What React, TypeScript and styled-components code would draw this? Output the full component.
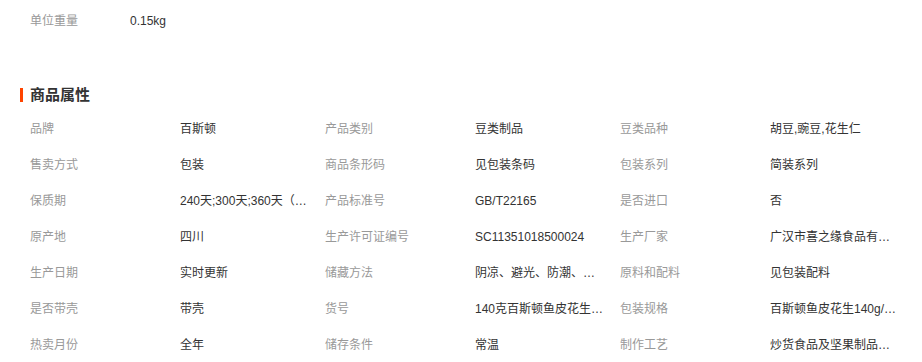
import React from "react";
import styled, { createGlobalStyle } from "styled-components";

const GlobalStyle = createGlobalStyle`
  html, body {
    margin: 0;
    padding: 0;
    background: #ffffff;
  }
  body {
    font-family: "Liberation Sans", "Noto Sans CJK SC", sans-serif;
    font-size: 12px;
    color: #333333;
  }
`;

const Page = styled.div`
  width: 922px;
  padding: 8px 0 0 0;
  box-sizing: border-box;
`;

const BasicRow = styled.div`
  display: flex;
  padding-left: 30px;
  line-height: 26px;
  height: 26px;
`;

const BasicLabel = styled.span`
  width: 100px;
  color: #999999;
`;

const BasicValue = styled.span`
  color: #333333;
`;

const SectionTitle = styled.h3`
  display: flex;
  align-items: center;
  margin: 51px 0 6px 20px;
  height: 20px;
  font-size: 15px;
  font-weight: bold;
  color: #333333;
  line-height: 20px;
  &::before {
    content: "";
    display: block;
    width: 3px;
    height: 14px;
    margin-right: 7px;
    background: #ff4400;
  }
`;

const AttrGrid = styled.div`
  display: grid;
  grid-template-columns: repeat(3, 150px 145px);
  grid-auto-rows: 36px;
  padding-left: 30px;
`;

const AttrLabel = styled.div`
  color: #999999;
  line-height: 36px;
  white-space: nowrap;
`;

const AttrValue = styled.div`
  color: #333333;
  line-height: 36px;
  max-width: 130px;
  white-space: nowrap;
  overflow: hidden;
  text-overflow: ellipsis;
`;

const attrs: [string, string][] = [
  ["品牌", "百斯顿"],
  ["产品类别", "豆类制品"],
  ["豆类品种", "胡豆,豌豆,花生仁"],
  ["售卖方式", "包装"],
  ["商品条形码", "见包装条码"],
  ["包装系列", "简装系列"],
  ["保质期", "240天;300天;360天（365天）"],
  ["产品标准号", "GB/T22165"],
  ["是否进口", "否"],
  ["原产地", "四川"],
  ["生产许可证编号", "SC11351018500024"],
  ["生产厂家", "广汉市喜之缘食品有限公司"],
  ["生产日期", "实时更新"],
  ["储藏方法", "阴凉、避光、防潮、密封保存"],
  ["原料和配料", "见包装配料"],
  ["是否带壳", "带壳"],
  ["货号", "140克百斯顿鱼皮花生袋装"],
  ["包装规格", "百斯顿鱼皮花生140g/袋*30袋"],
  ["热卖月份", "全年"],
  ["储存条件", "常温"],
  ["制作工艺", "炒货食品及坚果制品类（烘炒类）"],
];

export default function App() {
  return (
    <>
      <GlobalStyle />
      <Page>
        <BasicRow>
          <BasicLabel>单位重量</BasicLabel>
          <BasicValue>0.15kg</BasicValue>
        </BasicRow>
        <SectionTitle>商品属性</SectionTitle>
        <AttrGrid>
          {attrs.map(([k, v]) => (
            <React.Fragment key={k}>
              <AttrLabel>{k}</AttrLabel>
              <AttrValue>{v}</AttrValue>
            </React.Fragment>
          ))}
        </AttrGrid>
      </Page>
    </>
  );
}
